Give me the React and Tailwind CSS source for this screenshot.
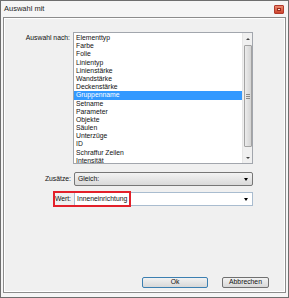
const ITEMS = [
  "Elementtyp",
  "Farbe",
  "Folie",
  "Linientyp",
  "Linienstärke",
  "Wandstärke",
  "Deckenstärke",
  "Gruppenname",
  "Setname",
  "Parameter",
  "Objekte",
  "Säulen",
  "Unterzüge",
  "ID",
  "Schraffur Zeilen",
  "Intensität",
];

function Arrow() {
  return <div className="w-0 h-0 border-l-[2.5px] border-r-[2.5px] border-t-[3px] border-l-transparent border-r-transparent border-t-black" />;
}

function Scrollbar() {
  return (
    <div className="w-[10px] h-full bg-[#f0f0f0] border-l border-[#e6e6e6] flex flex-col items-center">
      <div className="h-[11px] w-full flex items-center justify-center">
        <div className="w-0 h-0 border-l-[2px] border-r-[2px] border-b-[2px] border-l-transparent border-r-transparent border-b-[#444]" />
      </div>
      <div className="mt-[1px] h-[102px] w-[8px] rounded-[1px] border border-[#a3a3a3] bg-gradient-to-r from-[#ececec] to-[#d4d4d4] flex flex-col items-center justify-center gap-[1px]">
        <div className="w-[4px] h-px bg-[#8a8a8a]" />
        <div className="w-[4px] h-px bg-[#8a8a8a]" />
        <div className="w-[4px] h-px bg-[#8a8a8a]" />
      </div>
      <div className="flex-1" />
      <div className="h-[11px] w-full flex items-center justify-center">
        <div className="w-0 h-0 border-l-[2px] border-r-[2px] border-t-[2px] border-l-transparent border-r-transparent border-t-[#444]" />
      </div>
    </div>
  );
}

export default function App() {
  return (
    <div className="w-[289px] h-[298px] border border-[#6e6e6e] bg-[#f5f5f5] flex flex-col font-['Liberation_Sans',Arial,sans-serif] text-black select-none">
      <div className="h-[16px] flex items-center justify-between pl-[3px] pr-[4px]">
        <span className="text-[7.5px] text-[#1e1e1e]">Auswahl mit</span>
        <div className="w-[10px] h-[9px] rounded-[1px] border border-[#b2392c] bg-gradient-to-b from-[#ec8a70] to-[#cc432c] flex items-center justify-center">
          <div className="w-[4px] h-[3px] bg-[#f8e0d8] border border-[#9a2c1f]" />
        </div>
      </div>

      <div className="flex-1 px-[2px] pb-[4px]">
        <div className="h-full border border-[#8c8c8c]">
          <div className="h-full border border-white bg-[#f0f0f0] flex flex-col pt-[13px] pb-[3px] text-[6.8px] text-[#111]">
            <div className="flex">
              <div className="w-[68px] pr-[3px] pt-[2px] text-right leading-[8px]">Auswahl nach:</div>
              <div className="w-[180px] h-[132px] border border-[#a2a6ad] bg-white flex overflow-hidden">
                <div className="flex-1 pt-[1px]">
                  {ITEMS.map((it) => (
                    <div
                      key={it}
                      className={it === "Gruppenname" ? "h-[8.2px] leading-[8.2px] pl-[2px] bg-[#3399ff] text-white" : "h-[8.2px] leading-[8.2px] pl-[2px]"}
                    >
                      {it}
                    </div>
                  ))}
                </div>
                <Scrollbar />
              </div>
            </div>

            <div className="flex mt-[8px] items-center">
              <div className="w-[68px] pr-[2px] text-right">Zusätze:</div>
              <div className="ml-[1px] w-[179px] h-[14px] rounded-[2px] border border-[#777] bg-gradient-to-b from-[#f3f3f3] to-[#dadada] flex items-center justify-between pl-[3px] pr-[4px]">
                <span>Gleich:</span>
                <Arrow />
              </div>
            </div>

            <div className="relative flex mt-[6px] items-center">
              <div className="w-[68px] pr-[2px] text-right">Wert:</div>
              <div className="ml-[1px] w-[179px] h-[14px] border border-[#a9bccf] bg-white flex items-center justify-between pl-[2px] pr-[4px]">
                <span>Inneneinrichtung</span>
                <Arrow />
              </div>
              <div className="absolute left-[48px] top-[-1px] w-[78px] h-[16px] border-2 border-[#e3202a]" />
            </div>

            <div className="flex-1" />

            <div className="flex justify-end gap-[14px] pr-[15px]">
              <div className="w-[66px] h-[11px] rounded-[2px] border border-[#3c7fb1] bg-gradient-to-b from-[#f2f2f2] to-[#d8d8d8] flex items-center justify-center">Ok</div>
              <div className="w-[47px] h-[11px] rounded-[2px] border border-[#707070] bg-gradient-to-b from-[#f2f2f2] to-[#d8d8d8] flex items-center justify-center">Abbrechen</div>
            </div>
          </div>
        </div>
      </div>
    </div>
  );
}
